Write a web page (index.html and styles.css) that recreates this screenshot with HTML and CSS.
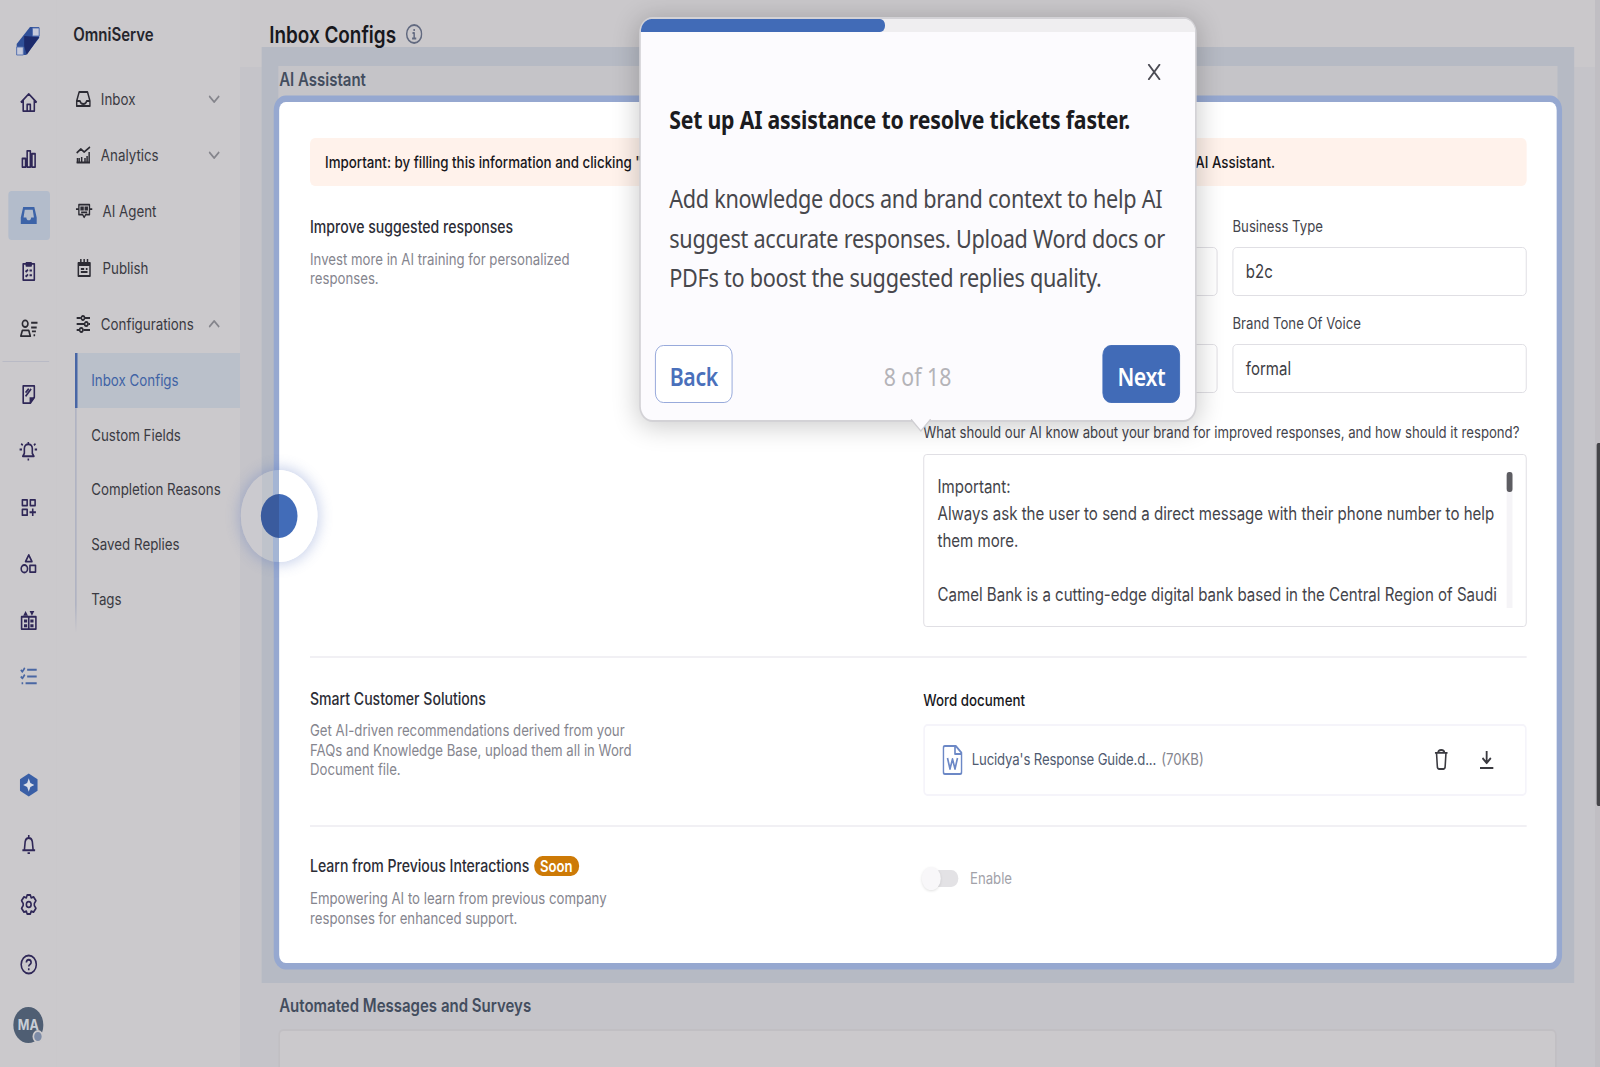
FILE: index.html
```html
<!DOCTYPE html>
<html lang="en">
<head>
    <meta charset="UTF-8">
    <meta name="viewport" content="width=device-width, initial-scale=1.0">
    <title>Inbox Configs</title>
    <link rel="stylesheet" href="styles.css">
</head>
<body>
    <div class="frame">
    <div class="screen">
        <!-- Icon rail -->
        <aside class="rail">
            <div class="logo">
                <svg width="30" height="30" viewBox="0 0 30 30">
                    <path d="M17 1h11v11L12 29H1V18z" fill="#2f4f98"/>
                    <path d="M10 10l18 1-15 18-3-9z" fill="#1c2a6b"/>
                    <path d="M20 2h8v8h-8zM1 21h8v8H1z" fill="#c6cadb" stroke="#5470b0"/>
                </svg>
            </div>
            <div class="rail-group">
                <a class="rail-item"><svg viewBox="0 0 22 22"><path d="M1 11L11 2l10 9M4 9v11h14V9M9 20v-7h4v7"/></svg></a>
                <a class="rail-item"><svg viewBox="0 0 22 22"><path d="M3 11h4v9H3zM9 3h4v17H9zM15 6h4v14h-4z"/></svg></a>
                <a class="rail-item active"><svg viewBox="0 0 22 22"><path fill-rule="evenodd" class="solid" d="M4 2h14l3 11v7H1v-7zM6 5L4.500 13H8c0 4 6 4 6 0h3.500L16 5z"/></svg></a>
                <a class="rail-item"><svg viewBox="0 0 22 22"><path d="M4 3h14v17H4zM8 5h6V2H8zM7 10l1 1 2-2M12 10h3M7 15l1 1 2-2M12 15h3"/></svg></a>
                <a class="rail-item"><svg class="dark" viewBox="0 0 22 22"><circle cx="6.500" cy="6" r="3.500"/><path d="M1 19h12l-2-6H3zM14 5h8M14 10h7M15 14h5M17 18h2"/></svg></a>
            </div>
            <div class="rail-line"></div>
            <div class="rail-group">
                <a class="rail-item"><svg viewBox="0 0 22 22"><path d="M4 2h14v12l-5 6H4zM7 9l4-4M7 13l7-8"/><path class="solid" d="M12 21v-7h7z"/></svg></a>
                <a class="rail-item"><svg class="alarm" viewBox="0 0 22 22"><path d="M4 17h14l-2-3V9c0-6-10-6-10 0v5zM11 2v2M10 20.500h2M2 4l2 1.500M20 4l-2 1.500M0 10h3M22 10h-3"/></svg></a>
                <a class="rail-item"><svg viewBox="0 0 22 22"><path d="M3 3h6v6H3zM13 3h6v6h-6zM3 13h6v6H3zM16 12v8M12 16h8"/></svg></a>
                <a class="rail-item"><svg viewBox="0 0 22 22"><path d="M11 2l4 7H7zM12.500 13h7v7h-7z"/><circle cx="5.500" cy="16.500" r="4"/></svg></a>
                <a class="rail-item"><svg viewBox="0 0 22 22"><path d="M2 7h18v13H2zM11 8v11"/><path class="solid" d="M4 6l3-5 3 5zM12 1h6l-3 5zM5 10h4v3H5zM13 10h4v3h-4zM5 15h4v3H5zM13 15h4v3h-4z"/></svg></a>
                <a class="rail-item blue"><svg viewBox="0 0 22 22"><path d="M1 4l2 2 3-4M9 4h12M1 11l2 2 3-4M9 11h12M2 18h2M7 18h14"/></svg></a>
            </div>
            <div class="rail-group bottom">
                <a class="rail-item"><svg class="hex" viewBox="0 0 24 24"><path d="M12 0l11 6v12l-11 6-11-6V6z" fill="#3a5fa6"/><path d="M12 5l2 5 5 2-5 2-2 5-2-5-5-2 5-2z" fill="#dcdfe8"/></svg></a>
                <a class="rail-item"><svg viewBox="0 0 22 22"><path d="M3 17h16M5.500 17l1-9c1-5 8-5 9 0l1 9M11 1v3M9.500 20h3"/></svg></a>
                <a class="rail-item"><svg viewBox="0 0 22 22"><path d="M9 1h4l1 3 3-1 3 4-2 3v2l2 3-3 4-3-1-1 3H9l-1-3-3 1-3-4 2-3v-2L2 7l3-4 3 1z"/><circle cx="11" cy="11" r="3"/></svg></a>
                <a class="rail-item"><svg viewBox="0 0 22 22"><circle cx="11" cy="11" r="9.500"/><path d="M8 9c0-4 6-4 6 0 0 2-3 2-3 4M11 15v2"/></svg></a>
                <a class="rail-item"><span class="avatar">MA<i></i></span></a>
            </div>
        </aside>

        <!-- Product menu -->
        <nav class="menu">
            <div class="menu-title">OmniServe</div>
            <a class="menu-item">
                <svg viewBox="0 0 18 18"><path d="M4 2h10l3 9v5H1v-5zM1 11h4c1 4 7 4 8 0h4"/></svg>
                Inbox
                <svg class="chevron" viewBox="0 0 14 8"><path d="M1 1l6 6 6-6"/></svg>
            </a>
            <a class="menu-item">
                <svg viewBox="0 0 18 18"><path d="M1 7l5-4 4 3 7-5M2 17v-5M7 17v-6M11 17v-5M16 17V6" /><path d="M1 16.500h16M4 12v5M13.500 10v7"/></svg>
                Analytics
                <svg class="chevron" viewBox="0 0 14 8"><path d="M1 1l6 6 6-6"/></svg>
            </a>
            <a class="menu-item wide">
                <svg viewBox="0 0 22 18"><path d="M4 2h14v11h-5l-2 3-2-3H4zM0 7h4M18 7h4M7 10.500h8"/><path class="solid" d="M6 4h4.500v4.500H6zM11.500 4H16v4.500h-4.500z"/></svg>
                AI Agent
            </a>
            <a class="menu-item wide">
                <svg viewBox="0 0 20 18"><path d="M3 4h14v13H3zM6 0v4M10 0v4M14 0v4M6 10h4M12 10h2M6 13h8"/><path class="solid" d="M3 3h14v4H3z"/></svg>
                Publish
            </a>
            <a class="menu-item">
                <svg viewBox="0 0 18 18"><path d="M1 3h5M11 3h6M1 9h9M15 9h2M1 15h3M9 15h8"/><circle cx="8.500" cy="3" r="2"/><circle cx="12.500" cy="9" r="2"/><circle cx="6.500" cy="15" r="2"/></svg>
                Configurations
                <svg class="chevron" viewBox="0 0 14 8"><path d="M1 7l6-6 6 6"/></svg>
            </a>
            <div class="submenu">
                <a class="active">Inbox Configs</a>
                <a>Custom Fields</a>
                <a>Completion Reasons</a>
                <a>Saved Replies</a>
                <a>Tags</a>
            </div>
        </nav>

        <main class="main">
            <header class="page-header">
                <h1>Inbox Configs</h1>
                <svg width="20" height="20" viewBox="0 0 20 20"><circle cx="10" cy="10" r="9"/><path d="M8 9h2v5M7.500 14.500h5M10 5v2"/></svg>
            </header>

            <div class="spotlight">
                <section class="section">
                    <h2>AI Assistant</h2>
                    <div class="card">
                        <div class="notice">
                            <span>Important: by filling this information and clicking "</span>
                            <span>AI Assistant.</span>
                        </div>

                        <div class="row row-responses">
                            <div class="info">
                                <h3>Improve suggested responses</h3>
                                <p>Invest more in AI training for personalized responses.</p>
                            </div>
                            <div class="fields">
                                <div class="field"><label>&nbsp;</label><div class="input"></div></div>
                                <div class="field"><label>Business Type</label><div class="input">b2c</div></div>
                                <div class="field"><label>&nbsp;</label><div class="input"></div></div>
                                <div class="field"><label>Brand Tone Of Voice</label><div class="input">formal</div></div>
                                <div class="field full">
                                    <label>What should our AI know about your brand for improved responses, and how should it respond?</label>
                                    <div class="textarea">
                                        <div class="text">Important:<br>Always ask the user to send a direct message with their phone number to help<br>them more.<br><br>Camel Bank is a cutting-edge digital bank based in the Central Region of Saudi</div>
                                        <div class="scroll"><div class="thumb"></div></div>
                                    </div>
                                </div>
                            </div>
                        </div>

                        <div class="row row-document">
                            <div class="info">
                                <h3>Smart Customer Solutions</h3>
                                <p>Get AI-driven recommendations derived from your<br>FAQs and Knowledge Base, upload them all in Word<br>Document file.</p>
                            </div>
                            <div class="document">
                                <h4>Word document</h4>
                                <div class="file">
                                    <svg class="file-icon" viewBox="0 0 24 30"><path d="M3 1h13l7 7v19q0 2-2 2H3q-2 0-2-2V3q0-2 2-2zM15 1v8h8M6 13l3 11 3-10 3 10 3-11"/></svg>
                                    <span class="file-name">Lucidya's Response Guide.d...</span>
                                    <span class="file-size">(70KB)</span>
                                    <svg class="trash" viewBox="0 0 18 22"><path d="M1 4h16M5 4q0-3 4-3t4 3M3 4l1 14q0 3 2 3h6q2 0 2-3l1-14"/></svg>
                                    <svg class="download" viewBox="0 0 18 20"><path d="M9 1v11M4 8l5 5 5-5M1 18h16"/></svg>
                                </div>
                            </div>
                        </div>

                        <div class="row row-learn">
                            <div class="info">
                                <h3>Learn from Previous Interactions <span class="badge">Soon</span></h3>
                                <p>Empowering AI to learn from previous company responses for enhanced support.</p>
                            </div>
                            <div class="toggle-field">
                                <span class="toggle"></span>
                                <span>Enable</span>
                            </div>
                        </div>

                        <div class="beacon"></div>
                    </div>
                </section>
            </div>

            <h2 class="next-title">Automated Messages and Surveys</h2>
            <div class="next-card"></div>
        </main>

        <div class="page-scroll"><div class="page-thumb"></div></div>

        <!-- Tour step -->
        <div class="tour">
            <div class="progress"><div class="progress-bar" style="width: 44%"></div></div>
            <svg class="close" viewBox="0 0 16 16"><path d="M1 0l14 16M15 0L1 16"/></svg>
            <h5>Set up AI assistance to resolve tickets faster.</h5>
            <p>Add knowledge docs and brand context to help AI<br>suggest accurate responses. Upload Word docs or<br>PDFs to boost the suggested replies quality.</p>
            <div class="tour-footer">
                <button class="back">Back</button>
                <span>8 of 18</span>
                <button class="next">Next</button>
            </div>
            <svg class="tail" viewBox="0 0 24 14"><path d="M0 0l12 12L24 0" fill="#fcfbfe" stroke="#cfced2" stroke-width="1.500"/></svg>
        </div>
    </div>
    </div>
</body>
</html>
```
FILE: styles.css
```css
* {
    box-sizing: border-box;
}
body {
    margin: 0;
    background: #c5c4c9;
    font-family: Inter, "Liberation Sans", sans-serif;
}
h1, h2, h3, h4, h5, p {
    margin: 0;
}
.frame {
    width: 1600px;
    height: 1067px;
    overflow: hidden;
}
/* 1920 wide layout, narrowed to a 1600 window */
.screen {
    position: relative;
    display: flex;
    width: 1920px;
    height: 1067px;
    overflow: hidden;
    transform: scaleX(0.83333);
    transform-origin: 0 0;
}
svg {
    fill: none;
    stroke-linejoin: round;
}
.solid {
    stroke: none;
}

/* rail */
.rail {
    display: flex;
    flex-direction: column;
    width: 68px;
    background: #cbc9cc;
}
.logo {
    height: 74px;
    padding: 26px 0 0 19px;
}
.logo path {
    stroke-width: 1;
}
.rail-item {
    display: flex;
    align-items: center;
    justify-content: center;
    width: 50px;
    height: 56.5px;
    margin-left: 9px;
}
.rail-item svg {
    width: 21px;
    height: 21px;
    stroke: #2f2757;
    stroke-width: 2;
}
.rail-item .solid {
    fill: #2f2757;
}
.rail-item .dark {
    width: 25px;
    stroke: #2c2b33;
}
.rail-item .alarm {
    width: 24px;
}
.rail-item.active {
    height: 49px;
    margin: 3.5px 0 4px 10px;
    padding-right: 2px;
    border-radius: 4px;
    background: #b3bccb;
}
.rail-item.active .solid {
    fill: #3c63a8;
}
.rail-item.blue svg {
    stroke: #4a67a3;
}
.rail-item .hex {
    width: 23px;
    height: 24px;
    stroke: none;
}
.rail-line {
    width: 56px;
    height: 1px;
    margin: 4.5px 0 4px 3px;
    background: #b9bac5;
}
.rail-group.bottom {
    margin-top: 49.5px;
}
.bottom .rail-item {
    height: 60px;
}
.avatar {
    position: relative;
    width: 36px;
    height: 36px;
    border-radius: 50%;
    background: #4f5e73;
    color: #c9ced6;
    font-size: 15px;
    font-weight: 700;
    line-height: 36px;
    text-align: center;
}
.avatar i {
    position: absolute;
    right: 0;
    bottom: 0;
    width: 13px;
    height: 13px;
    border: 2px solid #cbc9cc;
    border-radius: 50%;
    background: #7d8ba6;
}

/* menu */
.menu {
    width: 220px;
    background: #cbc9cc;
    color: #3a3a42;
    font-size: 16px;
}
.menu-title {
    height: 70.5px;
    padding-left: 20px;
    color: #25252d;
    font-size: 18px;
    font-weight: 600;
    line-height: 70px;
}
.menu-item {
    display: flex;
    align-items: center;
    gap: 12px;
    height: 56.3px;
    padding: 0 24px 0 23px;
}
.menu-item svg {
    width: 18px;
    height: 18px;
    stroke: #2c2b33;
    stroke-width: 1.8;
}
.menu-item.wide svg {
    width: 20px;
}
.menu-item .solid {
    fill: #2c2b33;
}
.menu-item .chevron {
    width: 14px;
    height: 8px;
    margin-left: auto;
    stroke: #85858c;
}
.submenu {
    margin: 1px 0 0 22px;
    border-left: 2px solid #b4b6c4;
    border-image: linear-gradient(#b0b3c2 90%, #cbc9cc) 1;
    padding-bottom: 6px;
}
.submenu a {
    display: block;
    height: 54.7px;
    padding-left: 17.5px;
    line-height: 55px;
}
.submenu .active {
    margin-left: -2px;
    border-left: 3px solid #4866a5;
    padding-left: 16.5px;
    background: #bac0ca;
    color: #3f63a5;
}

/* main */
.main {
    width: 1626px;
    background: #c5c4c9;
}
.page-header {
    display: flex;
    align-items: center;
    gap: 12px;
    height: 67px;
    padding: 1px 0 0 35px;
    background: #cac8cb;
}
.page-header h1 {
    position: relative;
    z-index: 1;
    color: #17171c;
    font-size: 22.7px;
    font-weight: 600;
}
.page-header svg {
    stroke: #626a80;
    stroke-width: 1.8;
}
.spotlight {
    position: relative;
    height: 936px;
    margin: -20px 25px 0 26px;
    padding: 19px 20px 0;
    background: #b6bac4;
}
.section {
    background: #c5c4c8;
}
h2 {
    height: 36px;
    padding-left: 1px;
    color: #434d5e;
    font-size: 18px;
    font-weight: 600;
    line-height: 28px;
}
.card {
    position: relative;
    height: 861px;
    margin: 0 1px;
    padding: 36px 36px 0 37px;
    border-radius: 8px;
    background: #fff;
    box-shadow: 0 0 0 6.5px #96a8d0;
}
.notice {
    display: flex;
    align-items: center;
    justify-content: space-between;
    height: 48px;
    padding: 0 302px 0 18px;
    border-radius: 6px;
    background: #fff2eb;
    color: #17171c;
    font-size: 16px;
    font-weight: 500;
}
.row {
    display: flex;
    justify-content: space-between;
}
.info {
    width: 400px;
}
.info h3 {
    color: #2c2d36;
    font-size: 16.9px;
    font-weight: 500;
    line-height: 22px;
}
.info p {
    margin-top: 12px;
    color: #85858e;
    font-size: 15.85px;
    line-height: 19.5px;
}
.row-responses {
    height: 472px;
    padding-top: 29.5px;
    border-bottom: 2px solid #f1f0f4;
}
.row-responses .info {
    width: 340px;
}
.fields {
    display: grid;
    grid-template-columns: 1fr 1fr;
    grid-template-rows: 97px 107px auto;
    column-gap: 18px;
    width: 724px;
}
.field label {
    display: block;
    height: 31px;
    color: #44444c;
    font-size: 15.8px;
    line-height: 22.5px;
    white-space: nowrap;
}
.field.full {
    grid-column: 1 / 3;
}
.full label {
    height: 34px;
    line-height: 26px;
}
.input {
    height: 49px;
    padding: 0 15px;
    border: 1px solid #dddce1;
    border-radius: 5px;
    color: #3d3d44;
    font-size: 18px;
    line-height: 48px;
}
.textarea {
    display: flex;
    justify-content: space-between;
    height: 173px;
    padding: 18px 16px;
    border: 1px solid #dddce1;
    border-radius: 4px;
    color: #44444a;
    font-size: 18.08px;
    line-height: 27px;
    white-space: nowrap;
}
.scroll {
    width: 7px;
    margin-top: -1px;
    background: #f5f4f7;
}
.thumb {
    width: 7px;
    height: 20px;
    border-radius: 3px;
    background: #5d5d62;
}
.row-document {
    height: 169px;
    padding-top: 29.5px;
    border-bottom: 2px solid #f1f0f4;
}
.row-document p {
    margin-top: 11.5px;
}
.document {
    width: 724px;
}
.document h4 {
    height: 36px;
    padding-top: 1px;
    color: #17171c;
    font-size: 16px;
    font-weight: 500;
    line-height: 22px;
}
.file {
    display: flex;
    align-items: center;
    height: 72px;
    padding: 0 37px 0 21px;
    border: 2px solid #f5f4fa;
    border-radius: 5px;
    font-size: 15.8px;
}
.file-icon {
    width: 24px;
    height: 30px;
    stroke: #6c88c6;
    stroke-width: 2;
}
.file-name {
    margin-left: 11px;
    color: #4f5a70;
    letter-spacing: -0.15px;
}
.file-size {
    margin: 0 auto 0 6px;
    color: #85858e;
}
.trash {
    width: 17px;
    height: 21px;
    stroke: #3a3a40;
    stroke-width: 2;
}
.download {
    width: 18px;
    height: 20px;
    margin-left: 37px;
    stroke: #3a3a40;
    stroke-width: 2.2;
}
.row-learn {
    padding-top: 28px;
}
.row-learn p {
    margin-top: 11.5px;
    line-height: 20.3px;
}
.badge {
    display: inline-block;
    width: 54px;
    height: 20px;
    margin-left: 1px;
    border-radius: 10px;
    background: #cd7a06;
    color: #fff;
    font-size: 15.8px;
    font-weight: 600;
    line-height: 21px;
    text-align: center;
}
.toggle-field {
    display: flex;
    align-items: center;
    gap: 14px;
    width: 724px;
    height: 46px;
    color: #a2a2a9;
    font-size: 15.8px;
}
.toggle {
    position: relative;
    width: 42px;
    height: 17px;
    border-radius: 9px;
    background: #e3e2e5;
}
.toggle::before {
    content: "";
    position: absolute;
    left: -2px;
    top: -3px;
    width: 23px;
    height: 23px;
    border-radius: 50%;
    background: #f8f7f9;
    box-shadow: 0 1px 3px rgba(0, 0, 0, 0.12);
}
.beacon {
    position: absolute;
    left: -46px;
    top: 368px;
    width: 92px;
    height: 92px;
    border-radius: 50%;
    background: linear-gradient(90deg, #cbcacf 25px, #bfc3cb 25px, #bfc3cb 39px, #a4b5d4 39px, #a4b5d4 46px, #fff 46px);
    box-shadow: 0 0 14px 3px rgba(80, 110, 190, 0.3);
}
.beacon::before {
    content: "";
    position: absolute;
    left: 24px;
    top: 24px;
    width: 44px;
    height: 44px;
    border-radius: 50%;
    background: linear-gradient(90deg, #3a5b9e 22px, #426cb8 22px);
}
.next-title {
    height: 46px;
    padding-left: 47px;
    line-height: 46px;
}
.next-card {
    height: 60px;
    margin: 0 46px 0 46px;
    border: 2px solid #c1bfc3;
    border-radius: 6px;
    background: #cbc9cc;
}
.page-scroll {
    width: 6px;
    padding: 443px 0 0 2px;
    background: #c0bec3;
}
.page-thumb {
    height: 363px;
    border-radius: 2px 0 0 2px;
    background: #454549;
}

/* tour popover */
.tour {
    position: absolute;
    z-index: 2;
    left: 769px;
    top: 19px;
    width: 665px;
    height: 401px;
    border-radius: 14px;
    background: #fcfbfe;
    box-shadow: 0 0 0 2px #d3d2d6, 0 3px 28px 4px rgba(0, 0, 0, 0.2);
    font-family: "Noto Sans", "Open Sans", sans-serif;
}
.progress {
    height: 13px;
    overflow: hidden;
    border-radius: 14px 14px 0 0;
    background: #efeef0;
}
.progress-bar {
    height: 13px;
    border-radius: 0 6px 6px 0;
    background: #416bb7;
}
.close {
    position: absolute;
    right: 41px;
    top: 45px;
    width: 16px;
    height: 16px;
    stroke: #4c4c55;
    stroke-width: 2;
}
.tour h5 {
    margin: 67px 0 0 34px;
    color: #1b1b20;
    font-size: 25.5px;
    font-weight: 700;
    letter-spacing: -0.24px;
    line-height: 40px;
    white-space: nowrap;
}
.tour p {
    margin: 40px 0 0 34px;
    color: #47474c;
    font-size: 26px;
    letter-spacing: -0.33px;
    line-height: 39.5px;
    white-space: nowrap;
}
.tour-footer {
    display: flex;
    align-items: center;
    justify-content: space-between;
    margin: 47px 18px 0 17px;
    color: #b4b3b8;
    font-size: 25.5px;
}
.tour button {
    width: 93px;
    height: 58px;
    padding: 4px 0 0;
    border: 1.5px solid #8ea2d8;
    border-radius: 10px;
    background: #fff;
    color: #4a70bb;
    font: 600 25.5px "Noto Sans", sans-serif;
    letter-spacing: -0.5px;
}
.tour-footer span {
    padding-top: 4px;
}
.tour .next {
    border-color: #416bb7;
    background: #416bb7;
    color: #fff;
}
.tail {
    position: absolute;
    left: 324px;
    top: 400px;
    width: 24px;
    height: 14px;
}
```
